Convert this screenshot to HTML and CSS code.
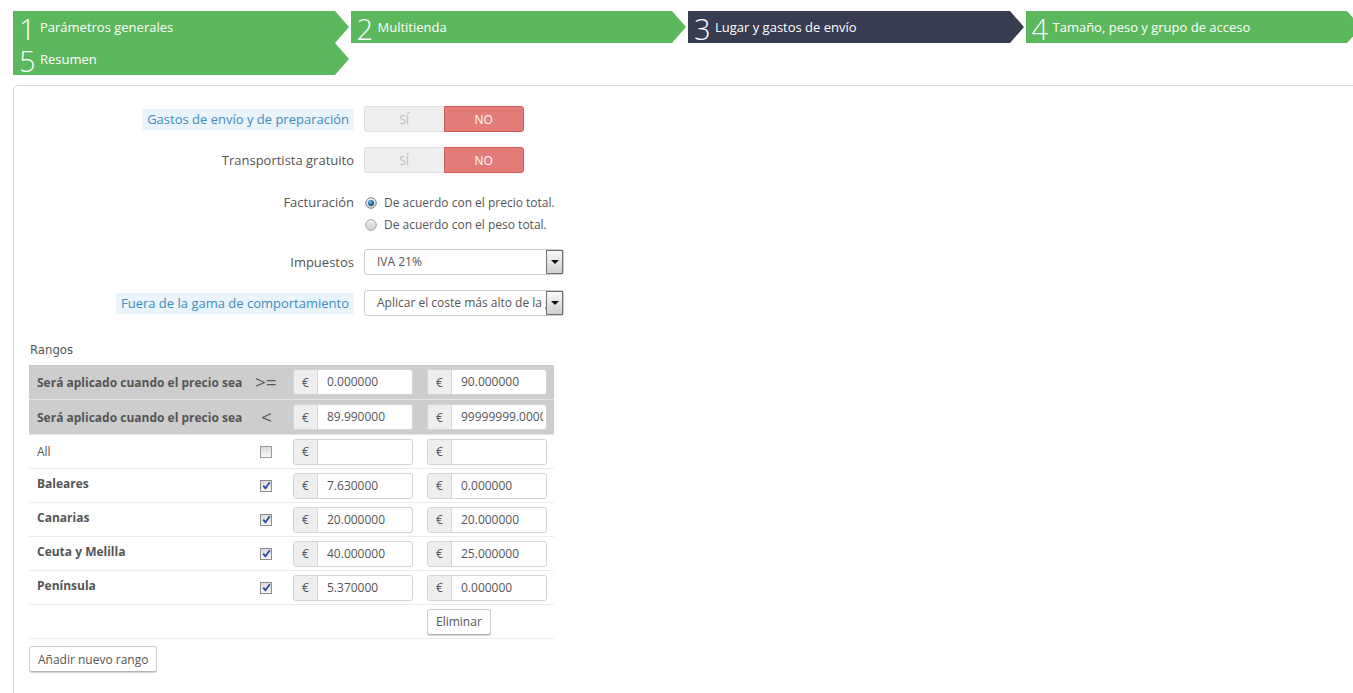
FILE: index.html
```html
<!DOCTYPE html>
<html lang="es">
<head>
<meta charset="utf-8">
<title>Transportista - Lugar y gastos de envío</title>
<link rel="stylesheet" href="styles.css">
</head>
<body>
<div class="page">
  <ul class="steps">
    <li class="step"><div class="step-box"><span class="num">1</span><span class="desc">Parámetros generales</span></div></li>
    <li class="step"><div class="step-box"><span class="num">2</span><span class="desc">Multitienda</span></div></li>
    <li class="step current"><div class="step-box"><span class="num">3</span><span class="desc">Lugar y gastos de envío</span></div></li>
    <li class="step"><div class="step-box"><span class="num">4</span><span class="desc">Tamaño, peso y grupo de acceso</span></div></li>
    <li class="step"><div class="step-box"><span class="num">5</span><span class="desc">Resumen</span></div></li>
  </ul>

  <div class="panel">
    <div class="form-row">
      <div class="label"><span class="hint">Gastos de envío y de preparación</span></div>
      <div class="control">
        <div class="switch"><span class="sw-yes">SÍ</span><span class="sw-no">NO</span></div>
      </div>
    </div>

    <div class="form-row">
      <div class="label">Transportista gratuito</div>
      <div class="control">
        <div class="switch"><span class="sw-yes">SÍ</span><span class="sw-no">NO</span></div>
      </div>
    </div>

    <div class="form-row radios-row">
      <div class="label label-top">Facturación</div>
      <div class="control">
        <div class="radio">
          <svg class="radio-icon" width="12" height="12" viewBox="0 0 12 12">
            <defs>
              <linearGradient id="rg1" x1="0" y1="0" x2="0" y2="1"><stop offset="0" stop-color="#f4f4f4"/><stop offset="1" stop-color="#c9c9c9"/></linearGradient>
              <radialGradient id="rb1" cx="0.4" cy="0.35" r="0.7"><stop offset="0" stop-color="#6fc0f2"/><stop offset="0.6" stop-color="#1f6fae"/><stop offset="1" stop-color="#0d3a66"/></radialGradient>
            </defs>
            <circle cx="6" cy="6" r="5.3" fill="url(#rg1)" stroke="#7d8894" stroke-width="1"/>
            <circle cx="6" cy="6" r="3" fill="url(#rb1)"/>
          </svg>
          <span>De acuerdo con el precio total.</span>
        </div>
        <div class="radio">
          <svg class="radio-icon" width="12" height="12" viewBox="0 0 12 12">
            <defs>
              <linearGradient id="rg2" x1="0" y1="0" x2="0" y2="1"><stop offset="0" stop-color="#f2f2f2"/><stop offset="1" stop-color="#cfcfcf"/></linearGradient>
            </defs>
            <circle cx="6" cy="6" r="5.3" fill="url(#rg2)" stroke="#a3a3a3" stroke-width="1"/>
          </svg>
          <span>De acuerdo con el peso total.</span>
        </div>
      </div>
    </div>

    <div class="form-row">
      <div class="label">Impuestos</div>
      <div class="control">
        <div class="select"><span class="select-text">IVA 21%</span><span class="select-arrow"></span></div>
      </div>
    </div>

    <div class="form-row">
      <div class="label"><span class="hint">Fuera de la gama de comportamiento</span></div>
      <div class="control">
        <div class="select"><span class="select-text">Aplicar el coste más alto de la gama definida</span><span class="select-arrow"></span></div>
      </div>
    </div>

    <div class="ranges-title">Rangos</div>

    <div class="ranges">
      <div class="rrow rhead">
        <div class="c-name">Será aplicado cuando el precio sea</div>
        <div class="c-sign">&gt;=</div>
        <div class="c-val"><div class="ig"><span class="addon">€</span><span class="inp"><span class="inp-in">0.000000</span></span></div></div>
        <div class="c-val"><div class="ig"><span class="addon">€</span><span class="inp"><span class="inp-in">90.000000</span></span></div></div>
      </div>
      <div class="rrow rhead">
        <div class="c-name">Será aplicado cuando el precio sea</div>
        <div class="c-sign lt">&lt;</div>
        <div class="c-val"><div class="ig"><span class="addon">€</span><span class="inp"><span class="inp-in">89.990000</span></span></div></div>
        <div class="c-val"><div class="ig"><span class="addon">€</span><span class="inp"><span class="inp-in">99999999.000000</span></span></div></div>
      </div>

      <div class="rrow">
        <div class="c-name">All</div>
        <div class="c-sign"><span class="cb"></span></div>
        <div class="c-val"><div class="ig"><span class="addon">€</span><span class="inp"></span></div></div>
        <div class="c-val"><div class="ig"><span class="addon">€</span><span class="inp"></span></div></div>
      </div>
      <div class="rrow">
        <div class="c-name zone">Baleares</div>
        <div class="c-sign"><span class="cb checked"><svg width="9" height="9" viewBox="0 0 9 9"><path d="M1.2 4.6 L3.4 7.2 L7.8 1.2" fill="none" stroke="#2b4aa0" stroke-width="1.8"/></svg></span></div>
        <div class="c-val"><div class="ig"><span class="addon">€</span><span class="inp"><span class="inp-in">7.630000</span></span></div></div>
        <div class="c-val"><div class="ig"><span class="addon">€</span><span class="inp"><span class="inp-in">0.000000</span></span></div></div>
      </div>
      <div class="rrow">
        <div class="c-name zone">Canarias</div>
        <div class="c-sign"><span class="cb checked"><svg width="9" height="9" viewBox="0 0 9 9"><path d="M1.2 4.6 L3.4 7.2 L7.8 1.2" fill="none" stroke="#2b4aa0" stroke-width="1.8"/></svg></span></div>
        <div class="c-val"><div class="ig"><span class="addon">€</span><span class="inp"><span class="inp-in">20.000000</span></span></div></div>
        <div class="c-val"><div class="ig"><span class="addon">€</span><span class="inp"><span class="inp-in">20.000000</span></span></div></div>
      </div>
      <div class="rrow">
        <div class="c-name zone">Ceuta y Melilla</div>
        <div class="c-sign"><span class="cb checked"><svg width="9" height="9" viewBox="0 0 9 9"><path d="M1.2 4.6 L3.4 7.2 L7.8 1.2" fill="none" stroke="#2b4aa0" stroke-width="1.8"/></svg></span></div>
        <div class="c-val"><div class="ig"><span class="addon">€</span><span class="inp"><span class="inp-in">40.000000</span></span></div></div>
        <div class="c-val"><div class="ig"><span class="addon">€</span><span class="inp"><span class="inp-in">25.000000</span></span></div></div>
      </div>
      <div class="rrow">
        <div class="c-name zone">Península</div>
        <div class="c-sign"><span class="cb checked"><svg width="9" height="9" viewBox="0 0 9 9"><path d="M1.2 4.6 L3.4 7.2 L7.8 1.2" fill="none" stroke="#2b4aa0" stroke-width="1.8"/></svg></span></div>
        <div class="c-val"><div class="ig"><span class="addon">€</span><span class="inp"><span class="inp-in">5.370000</span></span></div></div>
        <div class="c-val"><div class="ig"><span class="addon">€</span><span class="inp"><span class="inp-in">0.000000</span></span></div></div>
      </div>
      <div class="rrow">
        <div class="c-name"></div>
        <div class="c-sign"></div>
        <div class="c-val"></div>
        <div class="c-val"><button class="btn" type="button">Eliminar</button></div>
      </div>
    </div>

    <button class="btn add-btn" type="button">Añadir nuevo rango</button>
  </div>
</div>
</body>
</html>
```

FILE: styles.css
```css
html, body {
  margin: 0;
  padding: 0;
  overflow: hidden;
  background: #fff;
}

body {
  font-family: "Open Sans", "Liberation Sans", sans-serif;
  font-size: 13px;
  color: #555;
}

.page {
  width: 1350px;
  padding: 11px 0 0 13px;
}

/* ---------- wizard steps ---------- */
.steps {
  list-style: none;
  margin: 0;
  padding: 0;
  display: flex;
  flex-wrap: wrap;
}

.step {
  width: 25%;
  height: 32px;
}

.step-box {
  position: relative;
  height: 32px;
  margin-right: 16px;
  background: #5cb85c;
  color: #fff;
  display: flex;
  align-items: center;
  white-space: nowrap;
  overflow: visible;
}

.step-box::after {
  content: "";
  position: absolute;
  left: 100%;
  top: 0;
  border-left: 14px solid #5cb85c;
  border-top: 16px solid transparent;
  border-bottom: 16px solid transparent;
}

.current .step-box {
  background: #383c50;
}

.current .step-box::after {
  border-left-color: #383c50;
}

.num {
  display: inline-block;
  width: 20px;
  padding-left: 6px;
  font-size: 29px;
  font-weight: 300;
  line-height: 26px;
  margin-top: 3px;
}

.desc {
  font-size: 13px;
  padding-left: 1px;
}

/* ---------- panel ---------- */
.panel {
  margin-top: 10px;
  border: 1px solid #d6dadd;
  border-radius: 5px;
  padding: 20px 15px 40px;
  min-height: 640px;
}

.form-row {
  display: flex;
  align-items: center;
  margin-bottom: 15px;
}

.label {
  flex: none;
  width: 335px;
  text-align: right;
  padding-right: 10px;
  box-sizing: border-box;
  font-size: 13px;
  color: #555;
}

.hint {
  display: inline-block;
  background: #eaf4fb;
  color: #3f8cb9;
  padding: 0 5px;
  line-height: 21px;
  border-radius: 2px;
}

.control {
  flex: none;
}

/* switch */
.switch {
  display: flex;
  width: 160px;
  height: 26px;
  font-size: 12px;
}

.sw-yes,
.sw-no {
  flex: 1;
  display: flex;
  align-items: center;
  justify-content: center;
  box-sizing: border-box;
}

.sw-yes {
  background: #eeeeee;
  color: #bcbcbc;
  border: 1px solid #e0e0e0;
  border-right: none;
  border-radius: 3px 0 0 3px;
}

.sw-no {
  background: #e27c78;
  color: #fff;
  border: 1px solid #d25a55;
  border-radius: 0 3px 3px 0;
}

/* radios */
.radios-row {
  align-items: flex-start;
  padding-top: 3px;
  margin-bottom: 14px;
}

.label-top {
  line-height: 22px;
}

.radio {
  display: flex;
  align-items: center;
  height: 22px;
  font-size: 12px;
  color: #555;
}

.radio-icon {
  margin-left: 1px;
  margin-right: 7px;
  margin-top: 1px;
}

/* select */
.select {
  width: 200px;
  height: 26px;
  box-sizing: border-box;
  border: 1px solid #cccccc;
  border-radius: 3px;
  display: flex;
  align-items: stretch;
  background: #fff;
  font-size: 12px;
  color: #555;
}

.select-text {
  flex: 1;
  overflow: hidden;
  white-space: nowrap;
  padding-left: 12px;
  line-height: 24px;
}

.select-arrow {
  flex: none;
  width: 17px;
  box-sizing: border-box;
  border: 1px solid #6f6f6f;
  background: linear-gradient(#fafafa, #cfcfcf);
  display: flex;
  align-items: center;
  justify-content: center;
}

.select-arrow::before {
  content: "";
  border-top: 4px solid #111;
  border-left: 4px solid transparent;
  border-right: 4px solid transparent;
}

/* ---------- ranges ---------- */
.ranges-title {
  font-family: "DejaVu Sans Condensed", "Liberation Sans Narrow", "Open Sans", sans-serif;
  font-size: 13px;
  color: #555;
  line-height: 20px;
  margin-top: 24px;
  margin-bottom: 5px;
  padding-left: 1px;
}

.ranges {
  width: 525px;
}

.rrow {
  display: flex;
  height: 34px;
  box-sizing: border-box;
  border-bottom: 1px solid #eaedef;
}

.rrow.rhead {
  height: 35px;
  background: #cdcdcd;
  border-bottom: 1px solid #e4e4e4;
}

.c-name {
  width: 222px;
  flex: none;
  padding-left: 8px;
  box-sizing: border-box;
  display: flex;
  align-items: center;
  font-size: 12px;
  color: #555;
}

.rhead .c-name {
  font-weight: bold;
}

.c-name.zone {
  font-weight: bold;
  padding-bottom: 4px;
}

.c-sign {
  width: 37px;
  flex: none;
  display: flex;
  align-items: center;
  padding-left: 4px;
  box-sizing: border-box;
  font-size: 19px;
  color: #555;
}

.c-sign.lt {
  padding-left: 10px;
}

.c-val {
  width: 134px;
  flex: none;
  display: flex;
  align-items: center;
  padding-left: 5px;
  box-sizing: border-box;
}

.c-val + .c-val {
  width: 132px;
}

.ig {
  display: flex;
  width: 120px;
  height: 26px;
  box-sizing: border-box;
  border: 1px solid #d0d5d8;
  border-radius: 3px;
  overflow: hidden;
  background: #fff;
}

.addon {
  flex: none;
  width: 23px;
  background: #eeeeee;
  border-right: 1px solid #d7d7d7;
  display: flex;
  align-items: center;
  justify-content: center;
  font-size: 12px;
  color: #555;
}

.inp {
  flex: 1;
  min-width: 0;
  padding: 0 3px 0 9px;
  line-height: 24px;
  font-size: 12px;
  color: #555;
}

.inp-in {
  display: block;
  white-space: nowrap;
  overflow: hidden;
}

/* checkbox */
.cb {
  width: 12px;
  height: 12px;
  box-sizing: border-box;
  margin-left: 5px;
  border: 1px solid #9a9a9a;
  background: linear-gradient(#dcdcdc, #f8f8f8);
  display: flex;
  align-items: center;
  justify-content: center;
}

.cb.checked {
  border-color: #8c8c8c;
}

/* buttons */
.btn {
  font-family: "Open Sans", "Liberation Sans", sans-serif;
  font-size: 12px;
  color: #555;
  background: #fff;
  border: 1px solid #cccccc;
  border-bottom-color: #b5b5b5;
  border-radius: 3px;
  box-shadow: 0 1px 0 #d5d5d5;
  height: 26px;
  padding: 0 8px;
  margin: 0;
}

.add-btn {
  margin-top: 7px;
  padding: 0 8px;
}
```
